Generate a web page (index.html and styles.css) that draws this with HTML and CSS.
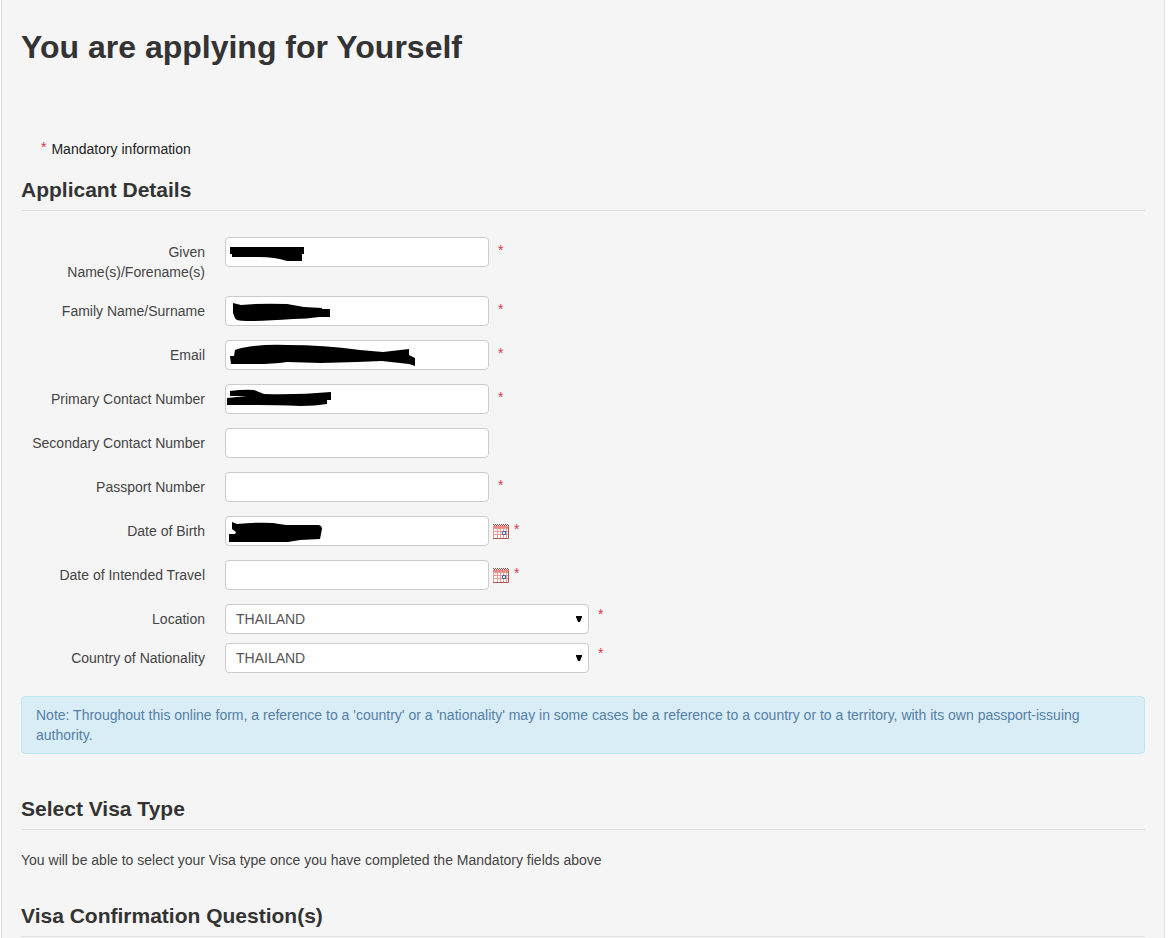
FILE: index.html
```html
<!DOCTYPE html>
<html lang="en">
<head>
    <meta charset="UTF-8">
    <title>Visa application</title>
    <link rel="stylesheet" href="styles.css">
</head>
<body>
<svg class="defs" width="0" height="0" aria-hidden="true">
    <symbol id="calendar" viewBox="0 0 16 16">
        <path fill="#fff" d="M0 2h16v13H0z"/>
        <path fill="#ee8a80" d="M0 2h16v2H0z"/>
        <path stroke="#8c4a48" stroke-dasharray="1 1" d="M0 .5h16M1 1.5h15"/>
        <path fill="none" stroke="#ec9a94" d="M.5 4v10M4.5 5v9M7.5 5v9M10.5 5v9M13.5 5v9M1 4.5h14M1 7.5h14M1 10.5h14"/>
        <path fill="none" stroke="#a85a50" d="M0 14.5h15.5V3"/>
        <path fill="#fff" stroke="#3566ad" d="M9.5 7.500h3v3h-3z"/>
    </symbol>
</svg>
<main class="well">
    <h1>You are applying for Yourself</h1>
    <p class="mandatory"><span class="star">*</span> Mandatory information</p>

    <form>
        <h2>Applicant Details</h2>
        <div class="fields">
            <div class="row">
                <label for="given">Given Name(s)/Forename(s)</label>
                <div class="control">
                    <input type="text" id="given">
                    <svg class="mark" width="264" height="30"><path d="M5 10h74v7h-2v7H62Q50 20 34 20H7v-3H5z"/></svg>
                </div>
                <span class="star">*</span>
            </div>
            <div class="row">
                <label for="family">Family Name/Surname</label>
                <div class="control">
                    <input type="text" id="family">
                    <svg class="mark" width="264" height="30"><path d="M8 7l8 2Q36 7 62 8l17 3 18 1v1h8v8l-11 0Q82 23 68 23 40 25 22 25q-12 0-12-3l-2-5z"/></svg>
                </div>
                <span class="star">*</span>
            </div>
            <div class="row">
                <label for="email">Email</label>
                <div class="control">
                    <input type="email" id="email">
                    <svg class="mark" width="264" height="30"><path d="M10 10Q26 4 62 5q36 0 73 5l23 2 26-3v6l6 3v8l-6-2-27-3-25 1-36 1-34-1Q48 24 30 24H6l-1-8h4z"/></svg>
                </div>
                <span class="star">*</span>
            </div>
            <div class="row">
                <label for="primary">Primary Contact Number</label>
                <div class="control">
                    <input type="tel" id="primary">
                    <svg class="mark" width="264" height="30"><path d="M5 7Q20 5 29 6l10 4q34 1 67-2v8h-4v4q-12 2-26 2-26-1-43-1H2v-7l20-2H5z"/></svg>
                </div>
                <span class="star">*</span>
            </div>
            <div class="row">
                <label for="secondary">Secondary Contact Number</label>
                <div class="control"><input type="tel" id="secondary"></div>
            </div>
            <div class="row">
                <label for="passport">Passport Number</label>
                <div class="control"><input type="text" id="passport"></div>
                <span class="star">*</span>
            </div>
            <div class="row">
                <label for="birth">Date of Birth</label>
                <div class="control">
                    <input type="text" id="birth">
                    <svg class="mark" width="264" height="30"><path d="M7 6l5 2q22-2 36-1l13 2h33q3 1 3 4l-2 10-20 1-12 2H4v-8h6l1-2-4-3z"/></svg>
                </div>
                <button type="button" class="picker" aria-label="Choose date of birth"><svg width="16" height="16"><use href="#calendar"/></svg></button>
                <span class="star">*</span>
            </div>
            <div class="row">
                <label for="travel">Date of Intended Travel</label>
                <div class="control"><input type="text" id="travel"></div>
                <button type="button" class="picker" aria-label="Choose date of travel"><svg width="16" height="16"><use href="#calendar"/></svg></button>
                <span class="star">*</span>
            </div>
            <div class="row row-select">
                <label for="location">Location</label>
                <div class="control">
                    <select id="location"><option>THAILAND</option></select>
                    <svg class="arrow" width="6" height="6"><path d="M0 0h6v1L4 6H2L0 1z"/></svg>
                </div>
                <span class="star">*</span>
            </div>
            <div class="row row-select">
                <label for="nationality">Country of Nationality</label>
                <div class="control">
                    <select id="nationality"><option>THAILAND</option></select>
                    <svg class="arrow" width="6" height="6"><path d="M0 0h6v1L4 6H2L0 1z"/></svg>
                </div>
                <span class="star">*</span>
            </div>
        </div>

        <p class="note">Note: Throughout this online form, a reference to a 'country' or a 'nationality' may in some cases be a reference to a country or to a territory, with its own passport-issuing authority.</p>

        <h2>Select Visa Type</h2>
        <p class="info">You will be able to select your Visa type once you have completed the Mandatory fields above</p>

        <h2>Visa Confirmation Question(s)</h2>
    </form>
</main>
</body>
</html>
```
FILE: styles.css
```css
html, body {
    margin: 0;
    padding: 0;
}

body {
    background: #fff;
    color: #444;
    font-family: "Liberation Sans", Arial, sans-serif;
    font-size: 14px;
    line-height: 20px;
}

.defs {
    position: absolute;
}

.well {
    min-height: 100vh;
    margin: 0 5px 0 1px;
    padding: 27px 19px 0;
    box-sizing: border-box;
    background: #f5f5f5;
    border: solid #e0e0e0;
    border-width: 0 1px;
}

h1, h2 {
    margin: 0;
    color: #333;
}

h1 {
    font-size: 32px;
    line-height: 40px;
}

h2 {
    padding-bottom: 10px;
    border-bottom: 1px solid #e0e0e0;
    font-size: 21px;
    line-height: 20px;
}

.mandatory {
    display: flex;
    gap: 5px;
    margin: 72px 0 21px 20px;
    color: #222;
}

.mandatory .star {
    line-height: 16px;
}

.star {
    color: #dc3545;
}

.fields {
    padding: 26px 0 14px;
}

.row {
    display: flex;
    align-items: flex-start;
    margin-bottom: 14px;
}

.row-select {
    margin-bottom: 9px;
}

.row label {
    width: 176px;
    padding: 5px 20px 0 8px;
    text-align: right;
}

.row .star {
    margin: 3px 0 0 9px;
}

.row-select .star {
    margin-top: 0;
}

.control {
    position: relative;
    width: 264px;
}

.row-select .control {
    width: 364px;
}

input, select {
    display: block;
    width: 100%;
    height: 30px;
    box-sizing: border-box;
    margin: 0;
    padding: 4px 10px;
    background: #fff;
    border: 1px solid #ccc;
    border-radius: 4px;
    color: #555;
    font: inherit;
}

select {
    appearance: none;
}

.mark {
    position: absolute;
    top: 0;
    left: 0;
    pointer-events: none;
}

.arrow {
    position: absolute;
    top: 12px;
    right: 7px;
    pointer-events: none;
}

.picker {
    height: 16px;
    margin: 8px 0 0 4px;
    padding: 0;
    background: none;
    border: 0;
}

.picker svg {
    display: block;
}

.row .picker + .star {
    margin-left: 5px;
}

.note {
    margin: 0 0 45px;
    padding: 8px 35px 8px 14px;
    background: #d9edf7;
    border: 1px solid #bce8f1;
    border-radius: 4px;
    color: #5580a5;
}

.info {
    margin: 20px 0 36px;
}
```
